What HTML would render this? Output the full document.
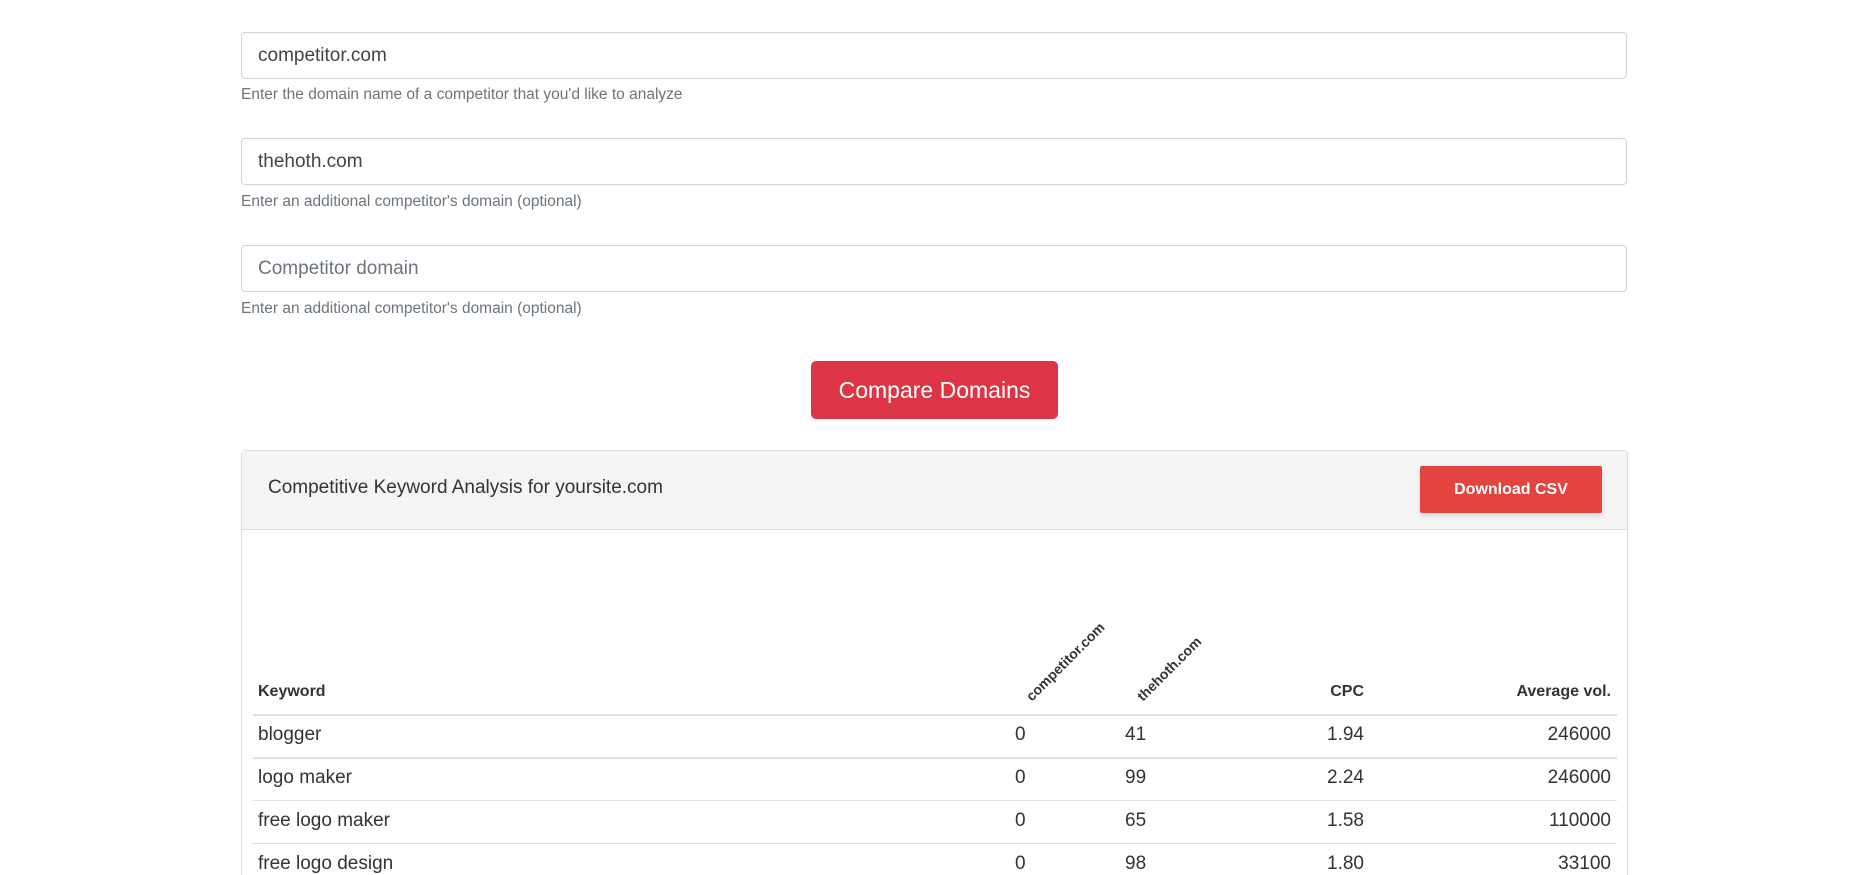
<!DOCTYPE html>
<html style="height:875px;overflow:hidden"><head><meta charset="utf-8"><style>
html,body{margin:0;height:875px;overflow:hidden}
body{width:1868px;background:#fff;font-family:"Liberation Sans",sans-serif;color:#333;position:relative}
.in{position:absolute;left:241px;width:1386px;height:47px;border:1px solid #ced4da;border-radius:4px;font-size:19px;line-height:45px;padding-left:16px;box-sizing:border-box;color:#444}
.help{position:absolute;left:241px;font-size:15.5px;color:#6c757d}
.btn{position:absolute;left:811px;top:361px;width:247px;height:58px;background:#dc3545;border-radius:5px;color:#fff;font-size:23px;line-height:58px;text-align:center}
.panel{position:absolute;left:241px;top:450px;width:1385px;height:424px;border:1px solid #dcdcdc;border-bottom:none;border-radius:4px 4px 0 0}
.ph{height:78px;background:#f5f5f5;border-bottom:1px solid #ddd}
.t{position:absolute;font-size:19px}
.h{position:absolute;font-size:16px;font-weight:bold}
.line{position:absolute;left:253px;width:1364px;height:1px;background:#dee2e6}
.r{text-align:right}
</style></head><body>
<div class="in" style="top:32px">competitor.com</div>
<div class="help" style="top:86px">Enter the domain name of a competitor that you'd like to analyze</div>
<div class="in" style="top:138px">thehoth.com</div>
<div class="help" style="top:193px">Enter an additional competitor's domain (optional)</div>
<div class="in" style="top:245px;color:#6c757d">Competitor domain</div>
<div class="help" style="top:300px">Enter an additional competitor's domain (optional)</div>
<div class="btn">Compare Domains</div>
<div class="panel"><div class="ph"></div></div>
<div class="t" style="left:268px;top:477px">Competitive Keyword Analysis for yoursite.com</div>
<div style="position:absolute;left:1420px;top:466px;width:182px;height:47px;background:#e3443f;border-radius:2px;color:#fff;font-weight:bold;font-size:16px;line-height:47px;text-align:center;box-shadow:0 3px 6px rgba(0,0,0,.12)">Download CSV</div>
<div class="h" style="left:258px;top:683px">Keyword</div>
<div class="h" style="left:1034px;top:688px;transform:rotate(-45deg);transform-origin:0 100%;font-size:14px;white-space:nowrap">competitor.com</div>
<div class="h" style="left:1145px;top:688px;transform:rotate(-45deg);transform-origin:0 100%;font-size:14px;white-space:nowrap">thehoth.com</div>
<div class="h r" style="left:1264px;width:100px;top:683px">CPC</div>
<div class="h r" style="left:1411px;width:200px;top:683px">Average vol.</div>
<div class="line" style="top:714px;height:2px"></div>
<div class="line" style="top:757px;height:2px"></div>
<div class="line" style="top:800px"></div>
<div class="line" style="top:843px"></div>
<div class="t" style="left:258px;top:724px">blogger</div><div class="t" style="left:1015px;top:724px">0</div><div class="t" style="left:1125px;top:724px">41</div><div class="t r" style="left:1264px;width:100px;top:724px">1.94</div><div class="t r" style="left:1411px;width:200px;top:724px">246000</div>
<div class="t" style="left:258px;top:767px">logo maker</div><div class="t" style="left:1015px;top:767px">0</div><div class="t" style="left:1125px;top:767px">99</div><div class="t r" style="left:1264px;width:100px;top:767px">2.24</div><div class="t r" style="left:1411px;width:200px;top:767px">246000</div>
<div class="t" style="left:258px;top:810px">free logo maker</div><div class="t" style="left:1015px;top:810px">0</div><div class="t" style="left:1125px;top:810px">65</div><div class="t r" style="left:1264px;width:100px;top:810px">1.58</div><div class="t r" style="left:1411px;width:200px;top:810px">110000</div>
<div class="t" style="left:258px;top:853px">free logo design</div><div class="t" style="left:1015px;top:853px">0</div><div class="t" style="left:1125px;top:853px">98</div><div class="t r" style="left:1264px;width:100px;top:853px">1.80</div><div class="t r" style="left:1411px;width:200px;top:853px">33100</div>
</body></html>
